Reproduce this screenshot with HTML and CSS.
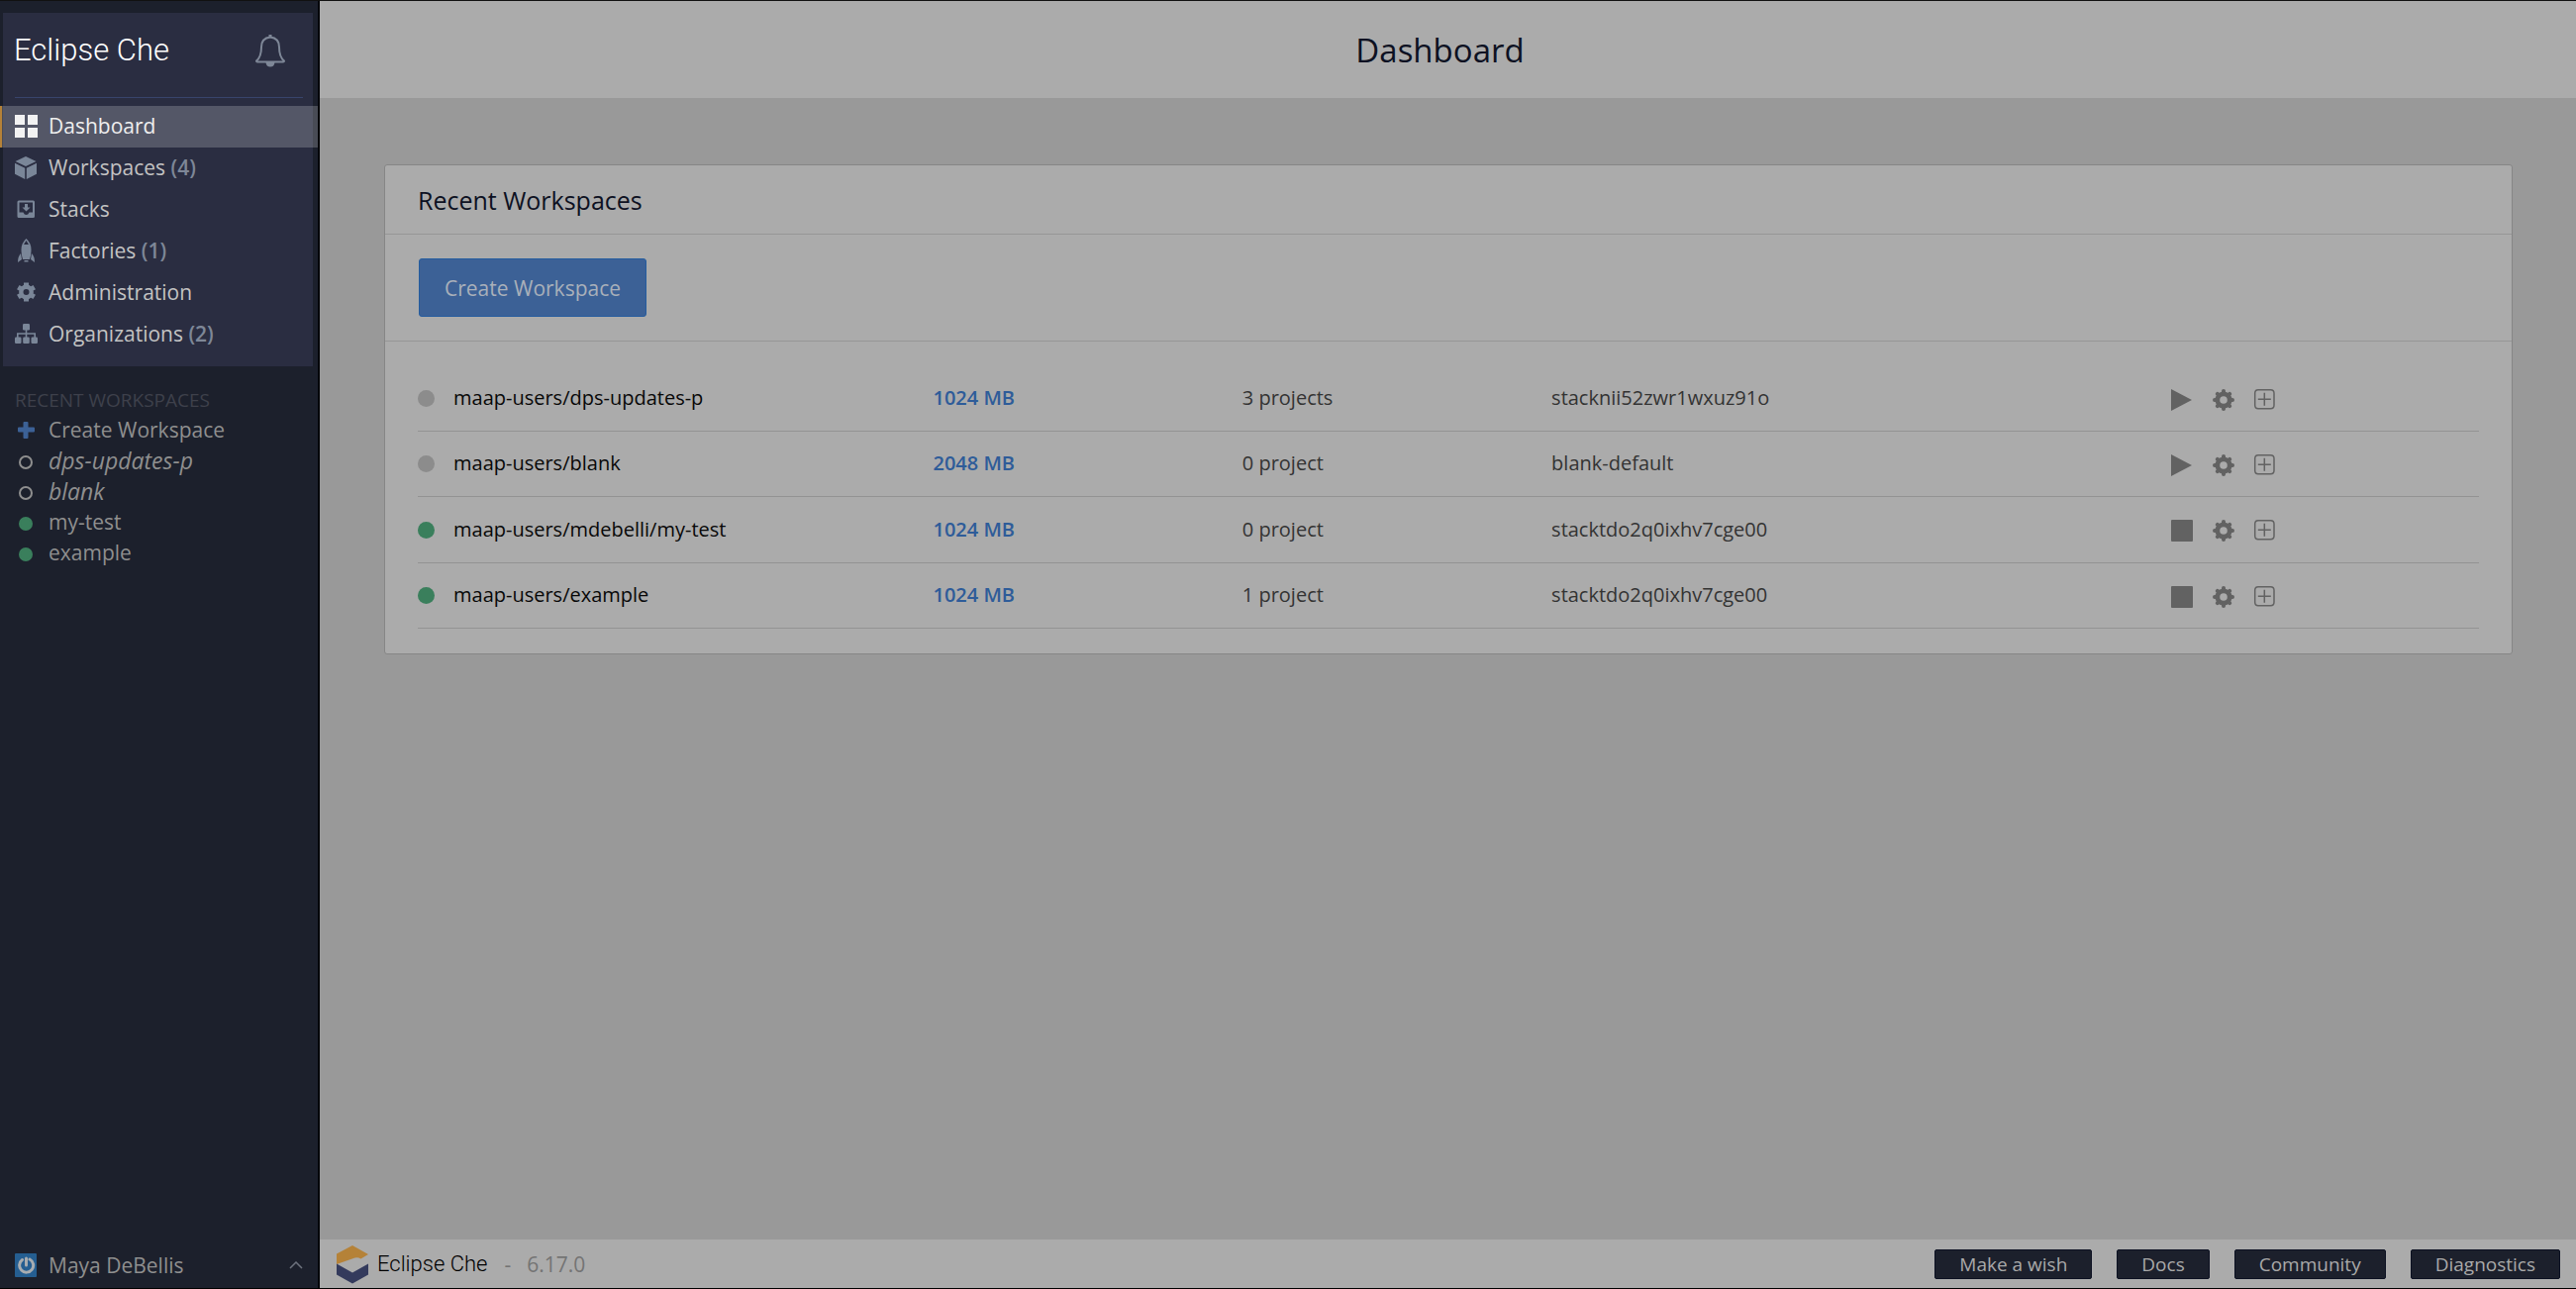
FILE: index.html
```html
<!DOCTYPE html>
<html lang="en">
<head>
<meta charset="utf-8">
<title>Eclipse Che | Dashboard</title>
<link rel="stylesheet" href="styles.css">
</head>
<body>
<svg class="sprite" aria-hidden="true">
  <symbol id="i-grid" viewBox="0 0 24 24"><path d="M1 1h10v10H1zM14 1h10v10H14zM1 14h10v10H1zM14 14h10v10H14z"/></symbol>
  <symbol id="i-cube" viewBox="0 0 24 24"><path d="M12 1l10.500 5L12 11 1.500 6zM1 7.800l10.200 4.900V24L1 18.700zM23 7.800v10.900L12.800 24V12.700z"/></symbol>
  <symbol id="i-stack" viewBox="0 0 24 24"><path fill-rule="evenodd" d="M5 3.500h14.500q1.500 0 1.500 1.500v14.500q0 1.500-1.500 1.500H5q-1.500 0-1.500-1.500V5q0-1.500 1.500-1.500zM5.500 5.500v10h4q1 2.500 3 2.500t3-2.500h3.500v-10z"/><path d="M11 7h3v3.500h2.500L12.500 14.500 8.500 10.500H11z"/></symbol>
  <symbol id="i-rocket" viewBox="0 0 24 24"><path fill-rule="evenodd" d="M12.500 0q5 4.500 5 11 0 6-1.500 10H9q-1.500-4-1.500-10 0-6.500 5-11zM12.500 2L10 6h5zM7 15l1 6-4 3q0-6 3-9zM18 15q3 3 3 9l-4-3zM10.500 22h4v1.500h-4z"/></symbol>
  <symbol id="i-cog" viewBox="0 0 24 24"><circle cx="12.500" cy="12" r="5.200" fill="none" stroke="currentColor" stroke-width="4.400"/><path fill="none" stroke="currentColor" stroke-width="5" stroke-linejoin="round" d="M12.500 5.500v-3M12.500 18.500v3M6.900 8.700l-2.600-1.500M18.100 15.300l2.600 1.500M6.900 15.300l-2.600 1.500M18.100 8.700l2.600-1.500"/></symbol>
  <symbol id="i-org" viewBox="0 0 24 24"><path fill="none" stroke="currentColor" stroke-width="1.600" d="M12.500 7v9M3.800 16v-4h17.400v4"/><rect x="9" y="2" width="7" height="6.500" rx="1.200"/><rect x="1" y="15.500" width="6.500" height="6.500" rx="1.200"/><rect x="9.200" y="15.500" width="6.600" height="6.500" rx="1.200"/><rect x="17.500" y="15.500" width="6.500" height="6.500" rx="1.200"/></symbol>
  <symbol id="i-bell" viewBox="0 0 32 34"><path fill="none" stroke="currentColor" stroke-width="2" stroke-linejoin="round" d="M2 27.500q5-4 5-14Q7 4.500 16 3.500q9 1 9 10 0 10 5 14 0 1-1 1H3q-1 0-1-1z"/><path d="M14.500 1h3v3h-3zM11.500 29h9q-.5 4.500-4.500 4.500T11.500 29z"/></symbol>
  <symbol id="i-plus" viewBox="0 0 24 24"><path d="M9.500 5q0-1 1-1h3q1 0 1 1v4.500H20q1 0 1 1v3q0 1-1 1h-5.500V20q0 1-1 1h-3q-1 0-1-1v-5.500H5q-1 0-1-1v-3q0-1 1-1h4.500z"/></symbol>
  <symbol id="i-user" viewBox="0 0 24 24"><rect x="1" y="0" width="22" height="24" rx="1"/><path fill="none" stroke="#a8acb0" stroke-width="3" stroke-linecap="round" d="M12.500 5v7M8.500 6.500a7 7 0 1 0 7.500-.5"/></symbol>
  <symbol id="i-up" viewBox="0 0 14 8"><path fill="none" stroke="currentColor" stroke-width="1.500" d="M1 7l6-6 6 6"/></symbol>
  <symbol id="i-che" viewBox="0 0 34 40"><path fill="#b58238" d="M1 9.500L17 1l16 9-7.500 4.500q-3-2-6-1L1 20z"/><path fill="#343a5c" d="M1 19.500l16 9 16-9v11L17 39.500 1 30.500z"/></symbol>
  <symbol id="i-play" viewBox="0 0 24 24"><path d="M1 1l21 11L1 23z"/></symbol>
  <symbol id="i-stop" viewBox="0 0 24 24"><rect x="1" y="1" width="22" height="22" rx="1"/></symbol>
  <symbol id="i-gear" viewBox="0 0 24 24"><circle cx="12" cy="12" r="6.200" fill="none" stroke="currentColor" stroke-width="4.800"/><path fill="none" stroke="currentColor" stroke-width="4" stroke-linecap="round" d="M12 5V3M12 19v2M5 12H3M19 12h2M7 7L5.800 5.800M17 17l1.200 1.200M17 7l1.200-1.200M7 17l-1.200 1.200"/></symbol>
  <symbol id="i-add" viewBox="0 0 24 24"><path fill="none" stroke="currentColor" stroke-width="1.500" d="M5 1.800h12.500q3.500 0 3.500 3.500v12q0 3.500-3.500 3.500H5q-3.300 0-3.300-3.500v-12q0-3.500 3.300-3.500zM4.800 11.200h13M11.300 4.800v13"/></symbol>
</svg>

<aside class="sidebar">
  <div class="panel">
    <div class="brand">
      <span class="wordmark">Eclipse Che</span>
      <button class="bell" aria-label="Notifications"><svg><use href="#i-bell"/></svg></button>
    </div>
    <nav class="nav" aria-label="Main">
      <a class="nav-link active" href="#dashboard"><svg class="icon"><use href="#i-grid"/></svg>Dashboard</a>
      <a class="nav-link" href="#workspaces"><svg class="icon"><use href="#i-cube"/></svg><span>Workspaces <b>(4)</b></span></a>
      <a class="nav-link" href="#stacks"><svg class="icon"><use href="#i-stack"/></svg>Stacks</a>
      <a class="nav-link" href="#factories"><svg class="icon"><use href="#i-rocket"/></svg><span>Factories <b>(1)</b></span></a>
      <a class="nav-link" href="#administration"><svg class="icon"><use href="#i-cog"/></svg>Administration</a>
      <a class="nav-link" href="#organizations"><svg class="icon"><use href="#i-org"/></svg><span>Organizations <b>(2)</b></span></a>
    </nav>
  </div>
  <section class="recent">
    <h2 class="recent-title">RECENT WORKSPACES</h2>
    <a class="recent-link" href="#create"><svg class="icon blue"><use href="#i-plus"/></svg>Create Workspace</a>
    <a class="recent-link stopped" href="#dps-updates-p"><span class="state"></span>dps-updates-p</a>
    <a class="recent-link stopped" href="#blank"><span class="state"></span>blank</a>
    <a class="recent-link" href="#my-test"><span class="state on"></span>my-test</a>
    <a class="recent-link" href="#example"><span class="state on"></span>example</a>
  </section>
  <button class="user"><svg class="icon avatar"><use href="#i-user"/></svg>Maya DeBellis<svg class="chevron"><use href="#i-up"/></svg></button>
</aside>

<div class="page">
  <header class="topbar"><h1>Dashboard</h1></header>
  <main class="content">
    <section class="card">
      <h2 class="card-title">Recent Workspaces</h2>
      <div class="card-actions"><button class="primary">Create Workspace</button></div>
      <div class="card-list">
        <table class="list">
          <tbody>
            <tr>
              <td class="name"><span class="dot"></span>maap-users/dps-updates-p</td><td class="ram">1024 MB</td><td>3 projects</td><td class="stack">stacknii52zwr1wxuz91o</td>
              <td class="tools"><button aria-label="Run"><svg><use href="#i-play"/></svg></button><button aria-label="Configure"><svg><use href="#i-gear"/></svg></button><button aria-label="Add"><svg><use href="#i-add"/></svg></button></td>
            </tr>
            <tr>
              <td class="name"><span class="dot"></span>maap-users/blank</td><td class="ram">2048 MB</td><td>0 project</td><td class="stack">blank-default</td>
              <td class="tools"><button aria-label="Run"><svg><use href="#i-play"/></svg></button><button aria-label="Configure"><svg><use href="#i-gear"/></svg></button><button aria-label="Add"><svg><use href="#i-add"/></svg></button></td>
            </tr>
            <tr>
              <td class="name"><span class="dot on"></span>maap-users/mdebelli/my-test</td><td class="ram">1024 MB</td><td>0 project</td><td class="stack">stacktdo2q0ixhv7cge00</td>
              <td class="tools"><button aria-label="Stop"><svg><use href="#i-stop"/></svg></button><button aria-label="Configure"><svg><use href="#i-gear"/></svg></button><button aria-label="Add"><svg><use href="#i-add"/></svg></button></td>
            </tr>
            <tr>
              <td class="name"><span class="dot on"></span>maap-users/example</td><td class="ram">1024 MB</td><td>1 project</td><td class="stack">stacktdo2q0ixhv7cge00</td>
              <td class="tools"><button aria-label="Stop"><svg><use href="#i-stop"/></svg></button><button aria-label="Configure"><svg><use href="#i-gear"/></svg></button><button aria-label="Add"><svg><use href="#i-add"/></svg></button></td>
            </tr>
          </tbody>
        </table>
      </div>
    </section>
  </main>
  <footer class="footer">
    <svg class="logo"><use href="#i-che"/></svg>
    <span class="product">Eclipse Che</span>
    <span class="version"><span>-</span><span>6.17.0</span></span>
    <div class="links">
      <button>Make a wish</button>
      <button>Docs</button>
      <button>Community</button>
      <button>Diagnostics</button>
    </div>
  </footer>
</div>
</body>
</html>
```
FILE: styles.css
```css
* { box-sizing: border-box; }

body {
  margin: 0;
  min-height: 100vh;
  display: grid;
  grid-template-columns: 323px 1fr;
  font-family: "Open Sans", "Noto Sans", sans-serif;
  font-size: 21px;
  background: #999;
  border-top: 1px solid #111;
  border-bottom: 1px solid #000;
}

h1, h2 { margin: 0; font-weight: 400; }
a { color: inherit; text-decoration: none; }
button {
  border: 0;
  padding: 0;
  background: none;
  font: inherit;
  color: inherit;
}
svg { display: block; fill: currentColor; }
.sprite { position: absolute; width: 0; height: 0; }

/* Sidebar */
.sidebar {
  display: flex;
  flex-direction: column;
  background: #1c202c;
  border-right: 2px solid #05060a;
  color: #8f8f8f;
}
.panel {
  margin: 12px 5px 0 3px;
  padding-bottom: 11px;
  background: #2a2d41;
}
.brand {
  display: flex;
  align-items: center;
  justify-content: space-between;
  height: 86px;
  margin: 0 10px 8px 12px;
  padding-bottom: 10px;
  border-bottom: 1px solid #38446b;
}
.wordmark, .product { font-family: Roboto, "Liberation Sans", sans-serif; font-weight: 300; }
.wordmark { color: #fff; font-size: 31px; margin-left: -1px; }
.bell { margin-right: 17px; color: #7e8797; }
.bell svg { width: 32px; height: 34px; }
.icon { width: 24px; height: 24px; flex: none; }

.nav-link {
  display: flex;
  align-items: center;
  gap: 11px;
  height: 42px;
  padding: 0 0 2px 11px;
  color: #c3c3c3;
}
.nav-link .icon { color: #7a8698; }
.nav-link b { font-weight: 600; color: #7e8797; }
.nav-link.active {
  margin: 0 -5px 0 -3px;
  padding-left: 12px;
  border-left: 2px solid #b58238;
  background: rgba(255, 255, 255, 0.2);
  color: #eee;
}
.nav-link.active .icon { color: #f2f2f2; }

.recent { padding: 19px 14px 0; }
.recent-title {
  margin-left: 1px;
  height: 29px;
  line-height: 30px;
  font-size: 19px;
  color: #3e404b;
}
.recent-link {
  display: flex;
  align-items: center;
  gap: 11px;
  height: 31px;
}
.recent-link.stopped { font-size: 23px; font-style: italic; }
.recent-link .icon.blue { color: #3c6196; }
.state {
  width: 14px;
  height: 14px;
  margin: 4px 5px 0;
  border: 2px solid #8f8f8f;
  border-radius: 50%;
}
.state.on { border-color: #3a7f5c; background: #3a7f5c; }

.user {
  display: flex;
  align-items: center;
  gap: 11px;
  height: 46px;
  margin-top: auto;
  padding: 0 15px 0 14px;
}
.avatar { color: #255e91; }
.chevron { width: 14px; height: 8px; margin-left: auto; color: #6d727e; }

/* Page */
.page { display: flex; flex-direction: column; min-width: 0; }
.topbar {
  display: flex;
  align-items: center;
  justify-content: center;
  height: 98px;
  padding-right: 16px;
  background: #ababab;
}
.topbar h1 { font-size: 33px; color: #0d1122; }
.content { flex: 1; padding: 67px 64px 40px 65px; }

.card {
  border: 1px solid #868686;
  border-radius: 3px;
  background: #ababab;
}
.card-title {
  height: 70px;
  padding: 0 33px;
  line-height: 70px;
  font-size: 25px;
  color: #0d1122;
  border-bottom: 1px solid #969696;
}
.card-actions { padding: 24px 34px; border-bottom: 1px solid #969696; }
.primary {
  display: block;
  height: 59px;
  padding: 0 25px;
  border: 1px solid #245c9f;
  border-radius: 3px;
  background: #3c6196;
  color: #a9b0ba;
}
.card-list { padding: 25px 33px; }
.list {
  width: 100%;
  height: 265px;
  table-layout: fixed;
  border-collapse: collapse;
  font-size: 20px;
  color: #333;
}
.list td { width: 15%; padding: 0 0 1px; border-bottom: 1px solid #939393; }
.list .name { width: 25%; color: #080808; }
.list .stack { width: 30%; }
.list .ram { color: #2e5c99; font-weight: 600; }
.dot {
  display: inline-block;
  width: 17px;
  height: 17px;
  margin-right: 19px;
  border-radius: 50%;
  background: #8c8c8c;
  vertical-align: -2px;
}
.dot.on { background: #3a7f5c; }
.tools button { display: inline-block; margin-right: 18px; color: #626262; vertical-align: middle; }
.tools svg { width: 24px; height: 24px; }

/* Footer */
.footer {
  display: flex;
  align-items: center;
  height: 49px;
  padding: 0 16px;
  background: #ababab;
}
.logo { width: 34px; height: 40px; }
.product { margin-left: 8px; font-size: 22px; color: #000; }
.version { display: flex; gap: 16px; margin-left: 17px; color: #747474; }
.links { display: flex; gap: 25px; margin-left: auto; }
.links button {
  height: 30px;
  padding: 0 24px;
  border: 1px solid #0c1122;
  border-radius: 2px;
  background: #1c202c;
  color: #a9a9a9;
  font-size: 19px;
  line-height: 26px;
}
```
